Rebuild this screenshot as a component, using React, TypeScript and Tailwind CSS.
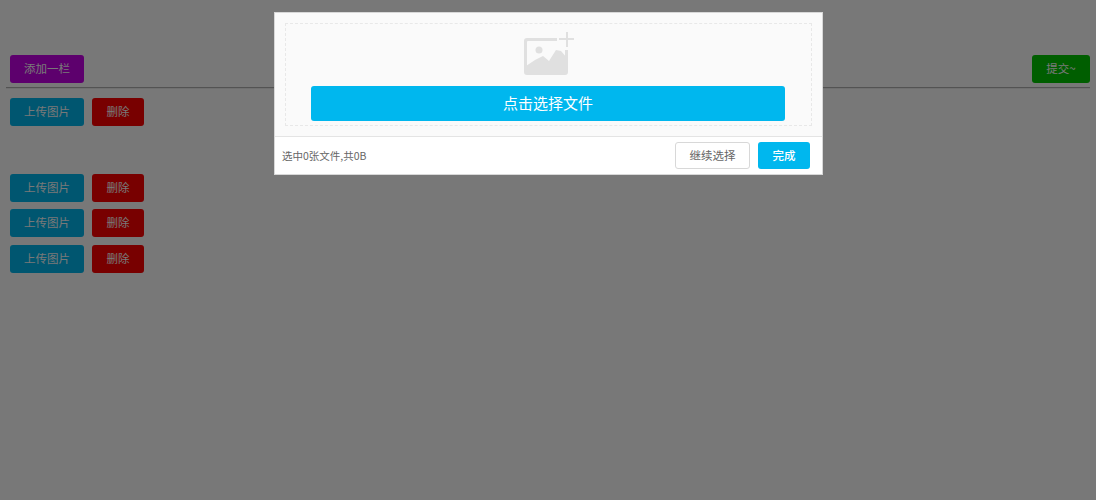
const font = { fontFamily: '"Noto Sans CJK SC", "Open Sans", sans-serif' };

function ImageAddIcon() {
  return (
    <svg width="52" height="45" viewBox="0 0 52 45" className="block" fill="#e0e0e0">
      {/* frame, open at the top right for the plus */}
      <path d="M4 6H34V9H5A1 1 0 0 0 4 10V39A1 1 0 0 0 5 40H41A1 1 0 0 0 42 39V18H45V40A3 3 0 0 1 42 43H4A3 3 0 0 1 1 40V9A3 3 0 0 1 4 6Z" />
      <circle cx="16" cy="18" r="3.500" />
      <path d="M3 34L12 28L20 24L26 29L33 18L38 19L44 26V41H3Z" />
      <rect x="36" y="6" width="15" height="2" />
      <rect x="43" y="0" width="2" height="15" />
    </svg>
  );
}

function Btn({ bg, w, children }: { bg: string; w: string; children: React.ReactNode }) {
  return (
    <button className={`${bg} ${w} h-[28px] rounded-[3px] text-[11.500px] text-white`}>{children}</button>
  );
}

function UploadRow() {
  return (
    <div className="flex gap-2">
      <Btn bg="bg-[#00b7ee]" w="w-[74px]">上传图片</Btn>
      <Btn bg="bg-[#ff0000]" w="w-[52px]">删除</Btn>
    </div>
  );
}

export default function App() {
  return (
    <div className="relative h-[500px] w-[1096px] overflow-hidden bg-white" style={font}>
      <div className="pl-[10px] pr-[6px] pt-[55px]">
        <div className="flex justify-between">
          <Btn bg="bg-[#c600e7]" w="w-[74px]">添加一栏</Btn>
          <Btn bg="bg-[#00c800]" w="w-[58px]">提交~</Btn>
        </div>
        <div className="-ml-1 mt-1 border-t border-b border-t-[#b0b0b0] border-b-[#eeeeee]" />
        <div className="mt-[9px]"><UploadRow /></div>
        <div className="mt-[48px] flex flex-col gap-[7px]">
          <UploadRow />
          <UploadRow />
          <div className="mt-[1px]"><UploadRow /></div>
        </div>
      </div>

      {/* dimmed backdrop */}
      <div className="absolute inset-0 bg-black/[.53]" />

      {/* upload dialog */}
      <div className="absolute left-[274px] top-[12px] w-[549px] border border-[#d8d8d8] bg-white">
        <div className="bg-[#fafafa] p-[10px]">
          <div className="flex h-[103px] flex-col items-center border border-dashed border-[#e8e8e8] pt-[8px]">
            <ImageAddIcon />
            <button className="mr-[1px] mt-[9px] h-[35px] w-[474px] rounded-[3px] bg-[#00b7ee] text-[15px] text-white">
              点击选择文件
            </button>
          </div>
        </div>
        <div className="flex h-[38px] items-center justify-between border-t border-[#e4e4e4] pl-[7px] pr-[12px]">
          <span className="text-[10.500px] text-[#666666]">选中0张文件,共0B</span>
          <div className="flex gap-2">
            <button className="h-[27px] w-[75px] rounded-[3px] border border-[#d8d8d8] bg-white text-[11.500px] text-[#666666]">
              继续选择
            </button>
            <button className="h-[27px] w-[52px] rounded-[3px] bg-[#00b7ee] text-[11.500px] font-medium text-white">完成</button>
          </div>
        </div>
      </div>
    </div>
  );
}
